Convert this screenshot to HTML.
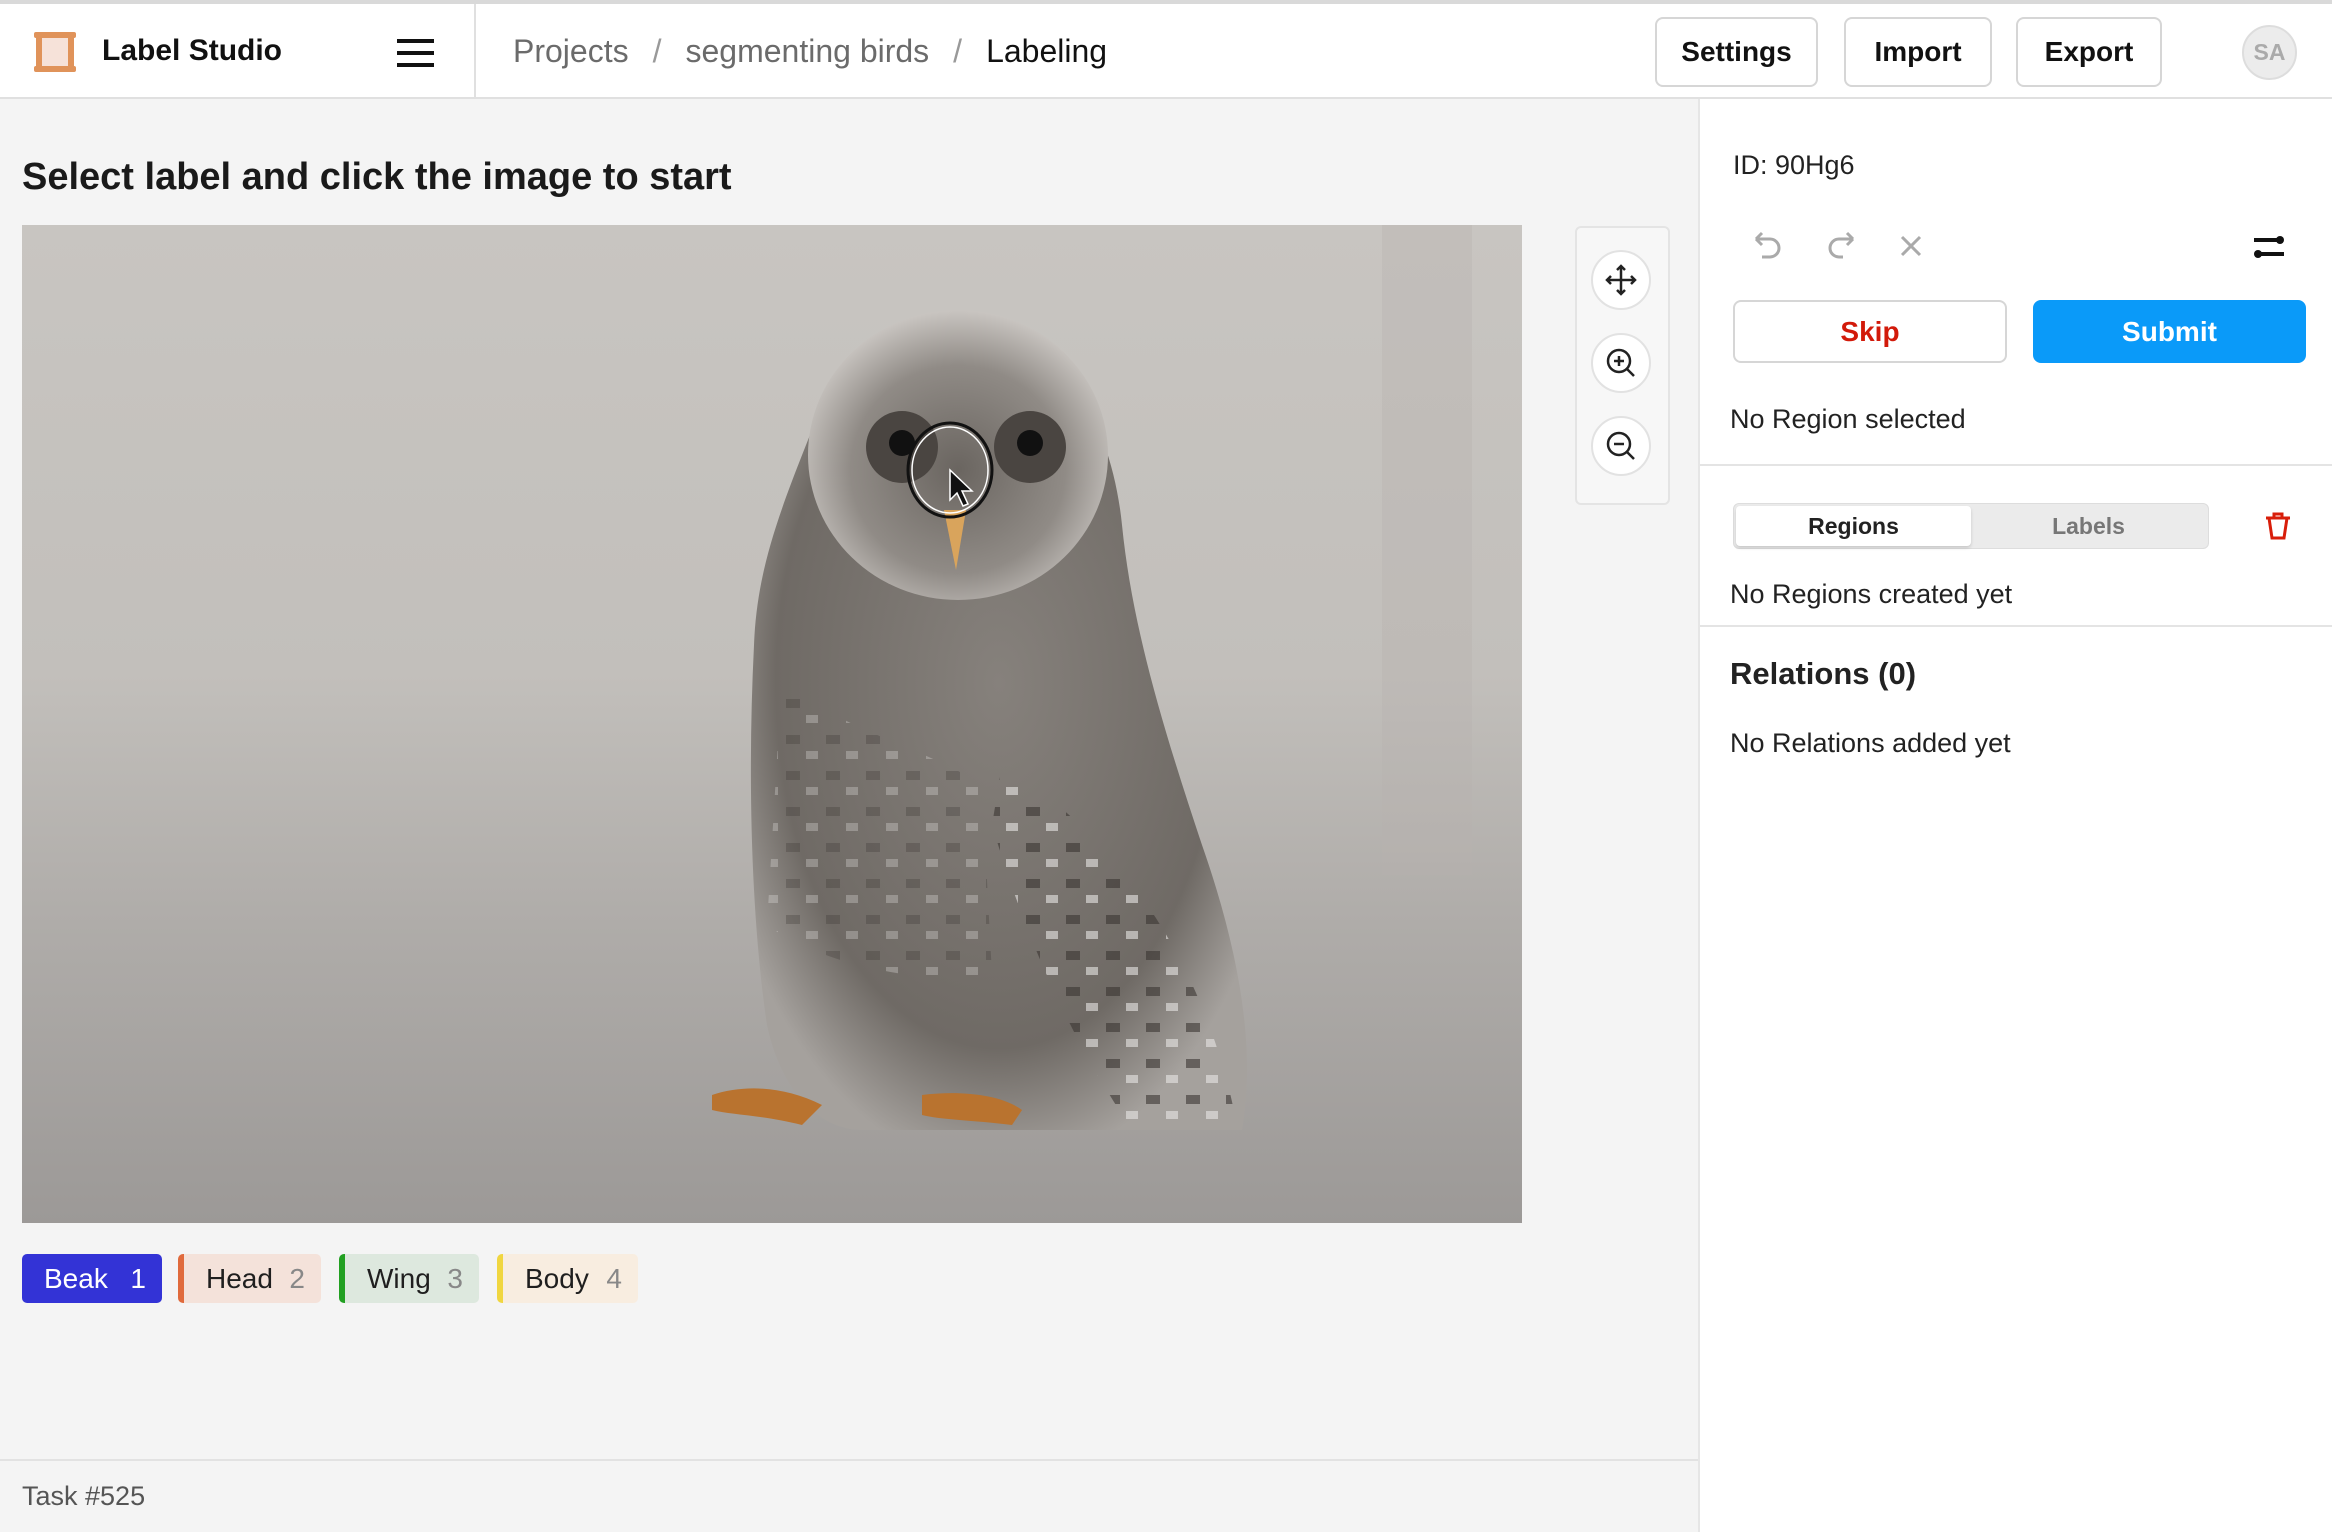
<!DOCTYPE html>
<html><head><meta charset="utf-8"><style>
*{box-sizing:border-box;margin:0;padding:0}
body{width:2332px;height:1532px;overflow:hidden;background:#fff;font-family:"Liberation Sans",Arial,sans-serif;position:relative;color:#1f1f1f}
.a{position:absolute}
.btn{position:absolute;border:2px solid #d6d6d6;border-radius:8px;background:#fff;font-size:28px;font-weight:bold;display:flex;align-items:center;justify-content:center;color:#111}
.lab{position:absolute;top:1254px;height:49px;border-radius:5px;font-size:28px;display:flex;align-items:center;padding-left:22px}
.lab span{position:absolute;right:16px;color:#888}
.tb{position:absolute;left:1591px;width:60px;height:60px;border-radius:50%;border:2px solid #e2e2e2;background:#fff}
.sl{color:#999;margin:0 24px}
</style></head><body>
<div class="a" style="left:0;top:0;width:2332px;height:4px;background:#d9d9d9"></div>
<div class="a" style="left:0;top:97px;width:2332px;height:2px;background:#e0e0e0"></div>
<div class="a" style="left:474px;top:4px;width:2px;height:94px;background:#e0e0e0"></div>
<svg class="a" style="left:30px;top:28px" width="50" height="48" viewBox="0 0 50 48"><rect x="7" y="6" width="36" height="36" fill="#f6e2d9"/><rect x="6" y="4" width="6" height="40" rx="2" fill="#e0935a"/><rect x="38" y="4" width="6" height="40" rx="2" fill="#e0935a"/><rect x="4" y="4" width="42" height="6" rx="2" fill="#e0935a"/><rect x="4" y="38" width="42" height="6" rx="2" fill="#e0935a"/></svg>
<div class="a" style="left:102px;top:34px;font-size:30px;font-weight:bold;color:#111">Label Studio</div>
<div class="a" style="left:397px;top:39px;width:37px;height:4px;background:#111"></div>
<div class="a" style="left:397px;top:51px;width:37px;height:4px;background:#111"></div>
<div class="a" style="left:397px;top:63px;width:37px;height:4px;background:#111"></div>
<div class="a" style="left:513px;top:33px;font-size:32px;color:#6b6b6b;white-space:pre">Projects<span class="sl">/</span>segmenting birds<span class="sl">/</span><span style="color:#111">Labeling</span></div>
<div class="btn" style="left:1655px;top:17px;width:163px;height:70px">Settings</div>
<div class="btn" style="left:1844px;top:17px;width:148px;height:70px">Import</div>
<div class="btn" style="left:2016px;top:17px;width:146px;height:70px">Export</div>
<div class="a" style="left:2242px;top:25px;width:55px;height:55px;border-radius:50%;background:#ececec;border:2px solid #ddd;color:#aaa;font-size:23px;font-weight:bold;display:flex;align-items:center;justify-content:center">SA</div>

<div class="a" style="left:0;top:99px;width:1698px;height:1433px;background:#f4f4f4"></div>
<div class="a" style="left:1698px;top:99px;width:2px;height:1433px;background:#e6e6e6"></div>
<div class="a" style="left:22px;top:156px;font-size:38px;font-weight:bold;color:#1a1a1a">Select label and click the image to start</div>

<svg class="a" style="left:22px;top:225px" width="1500" height="998" viewBox="0 0 1500 998">
<defs>
<linearGradient id="bg" x1="0" y1="0" x2="0" y2="1"><stop offset="0" stop-color="#c8c5c1"/><stop offset="0.45" stop-color="#c2bfbb"/><stop offset="0.7" stop-color="#afaca9"/><stop offset="1" stop-color="#9c9997"/></linearGradient>
<radialGradient id="bd" cx="0.5" cy="0.45" r="0.6"><stop offset="0" stop-color="#86817c"/><stop offset="0.75" stop-color="#6f6a65"/><stop offset="1" stop-color="#a5a19d"/></radialGradient>
<radialGradient id="hd" cx="0.5" cy="0.55" r="0.55"><stop offset="0" stop-color="#6a6560"/><stop offset="0.65" stop-color="#908b86"/><stop offset="1" stop-color="#c9c5c1"/></radialGradient>
<pattern id="sp" width="40" height="36" patternUnits="userSpaceOnUse"><rect x="4" y="6" width="14" height="9" fill="#3b3632" opacity=".6"/><rect x="24" y="22" width="12" height="8" fill="#e8e6e4" opacity=".6"/></pattern>
</defs>
<rect width="1500" height="998" fill="url(#bg)"/>
<rect x="1360" y="0" width="90" height="650" fill="#b6b3b0" opacity="0.35"/>
<path d="M800 180 C 760 280,735 340,732 420 C 725 560,730 700,745 800 C 760 870,800 905,840 905 L1220 905 C1235 820,1215 720,1180 620 C1140 500,1110 400,1100 300 C1090 200,1040 100,930 92 C 860 95,820 130,800 180 Z" fill="url(#bd)"/>
<path d="M980 540 C1080 600,1180 720,1215 900 L1110 905 C1040 800,1000 700,970 600Z" fill="url(#sp)"/>
<path d="M760 450 C 800 500,900 520,960 560 L970 750 C900 760,800 740,745 700Z" fill="url(#sp)" opacity=".5"/>
<ellipse cx="936" cy="230" rx="150" ry="145" fill="url(#hd)"/>
<ellipse cx="880" cy="222" rx="36" ry="36" fill="#4a4541"/>
<ellipse cx="1008" cy="222" rx="36" ry="36" fill="#4a4541"/>
<ellipse cx="880" cy="218" rx="13" ry="13" fill="#111"/>
<ellipse cx="1008" cy="218" rx="13" ry="13" fill="#111"/>
<path d="M922 285 L944 285 L934 345 Z" fill="#d9a45c"/>
<ellipse cx="928" cy="245" rx="42" ry="47" fill="none" stroke="#111" stroke-width="3"/>
<ellipse cx="928" cy="245" rx="38" ry="43" fill="none" stroke="#fff" stroke-width="1.5"/>
<path d="M928 245 L928 275 L935 268 L941 281 L946 279 L940 266 L950 266 Z" fill="#111" stroke="#fff" stroke-width="1.5"/>
<path d="M690 870 C720 860,760 860,800 880 L780 900 C740 890,710 890,690 885Z" fill="#b9732f"/>
<path d="M900 870 C940 865,980 870,1000 885 L990 900 C950 895,920 895,900 890Z" fill="#b9732f"/>
</svg>

<div class="a" style="left:1575px;top:226px;width:95px;height:279px;border:2px solid #e4e4e4;border-radius:6px;background:#f7f7f7"></div>
<div class="tb" style="top:250px"><svg width="56" height="56" viewBox="0 0 56 56"><path d="M28 14V42M14 28H42M24 18l4-4 4 4M24 38l4 4 4-4M18 24l-4 4 4 4M38 24l4 4-4 4" stroke="#222" stroke-width="2.5" fill="none"/></svg></div>
<div class="tb" style="top:333px"><svg width="56" height="56" viewBox="0 0 56 56"><circle cx="26" cy="26" r="11" stroke="#222" stroke-width="2.5" fill="none"/><path d="M34 34l7 7M21 26h10M26 21v10" stroke="#222" stroke-width="2.5"/></svg></div>
<div class="tb" style="top:416px"><svg width="56" height="56" viewBox="0 0 56 56"><circle cx="26" cy="26" r="11" stroke="#222" stroke-width="2.5" fill="none"/><path d="M34 34l7 7M21 26h10" stroke="#222" stroke-width="2.5"/></svg></div>

<div class="lab" style="left:22px;width:140px;background:#3333d6;color:#fff">Beak<span style="color:#fff">1</span></div>
<div class="lab" style="left:178px;width:143px;background:#f4e2da;border-left:6px solid #e06a3c">Head<span>2</span></div>
<div class="lab" style="left:339px;width:140px;background:#dde8de;border-left:6px solid #22a022">Wing<span>3</span></div>
<div class="lab" style="left:497px;width:141px;background:#f8ede0;border-left:6px solid #f0d640">Body<span>4</span></div>

<div class="a" style="left:0;top:1459px;width:1698px;height:2px;background:#e2e2e2"></div>
<div class="a" style="left:22px;top:1481px;font-size:27px;color:#555">Task #525</div>

<div class="a" style="left:1733px;top:150px;font-size:27px;color:#222">ID: 90Hg6</div>
<svg class="a" style="left:1748px;top:227px" width="200" height="40" viewBox="0 0 200 40"><path d="M8 12h14a9 9 0 010 18h-8M8 12l6-6M8 12l6 6" stroke="#aaa" stroke-width="3" fill="none"/><path d="M105 12H91a9 9 0 000 18h4M105 12l-6-6M105 12l-6 6" stroke="#aaa" stroke-width="3" fill="none"/><path d="M154 10l18 18M172 10l-18 18" stroke="#aaa" stroke-width="3"/></svg>
<svg class="a" style="left:2250px;top:232px" width="40" height="32" viewBox="0 0 40 32"><path d="M4 8h26M8 22h26" stroke="#111" stroke-width="4"/><circle cx="30" cy="8" r="4" fill="#111"/><circle cx="8" cy="22" r="4" fill="#111"/></svg>
<div class="btn" style="left:1733px;top:300px;width:274px;height:63px;color:#d21a0a;font-size:28px">Skip</div>
<div class="btn" style="left:2033px;top:300px;width:273px;height:63px;background:#0a9af9;border-color:#0a9af9;color:#fff">Submit</div>
<div class="a" style="left:1730px;top:404px;font-size:27px;color:#222">No Region selected</div>
<div class="a" style="left:1700px;top:464px;width:632px;height:2px;background:#e4e4e4"></div>
<div class="a" style="left:1733px;top:503px;width:476px;height:46px;background:#ebebeb;border:1px solid #ddd;border-radius:6px"></div>
<div class="a" style="left:1736px;top:506px;width:235px;height:40px;background:#fff;border-radius:4px;box-shadow:0 2px 3px rgba(0,0,0,.15);font-size:23px;font-weight:bold;display:flex;align-items:center;justify-content:center;color:#222">Regions</div>
<div class="a" style="left:1971px;top:506px;width:235px;height:40px;font-size:23px;font-weight:bold;display:flex;align-items:center;justify-content:center;color:#777">Labels</div>
<svg class="a" style="left:2264px;top:510px" width="28" height="32" viewBox="0 0 28 32"><path d="M2 8h24M10 8V4h8v4M5 8l3 20h12l3-20" stroke="#d81e0a" stroke-width="3" fill="none"/></svg>
<div class="a" style="left:1730px;top:579px;font-size:27px;color:#222">No Regions created yet</div>
<div class="a" style="left:1700px;top:625px;width:632px;height:2px;background:#e4e4e4"></div>
<div class="a" style="left:1730px;top:656px;font-size:31px;font-weight:bold;color:#222">Relations (0)</div>
<div class="a" style="left:1730px;top:728px;font-size:27px;color:#222">No Relations added yet</div>
</body></html>
